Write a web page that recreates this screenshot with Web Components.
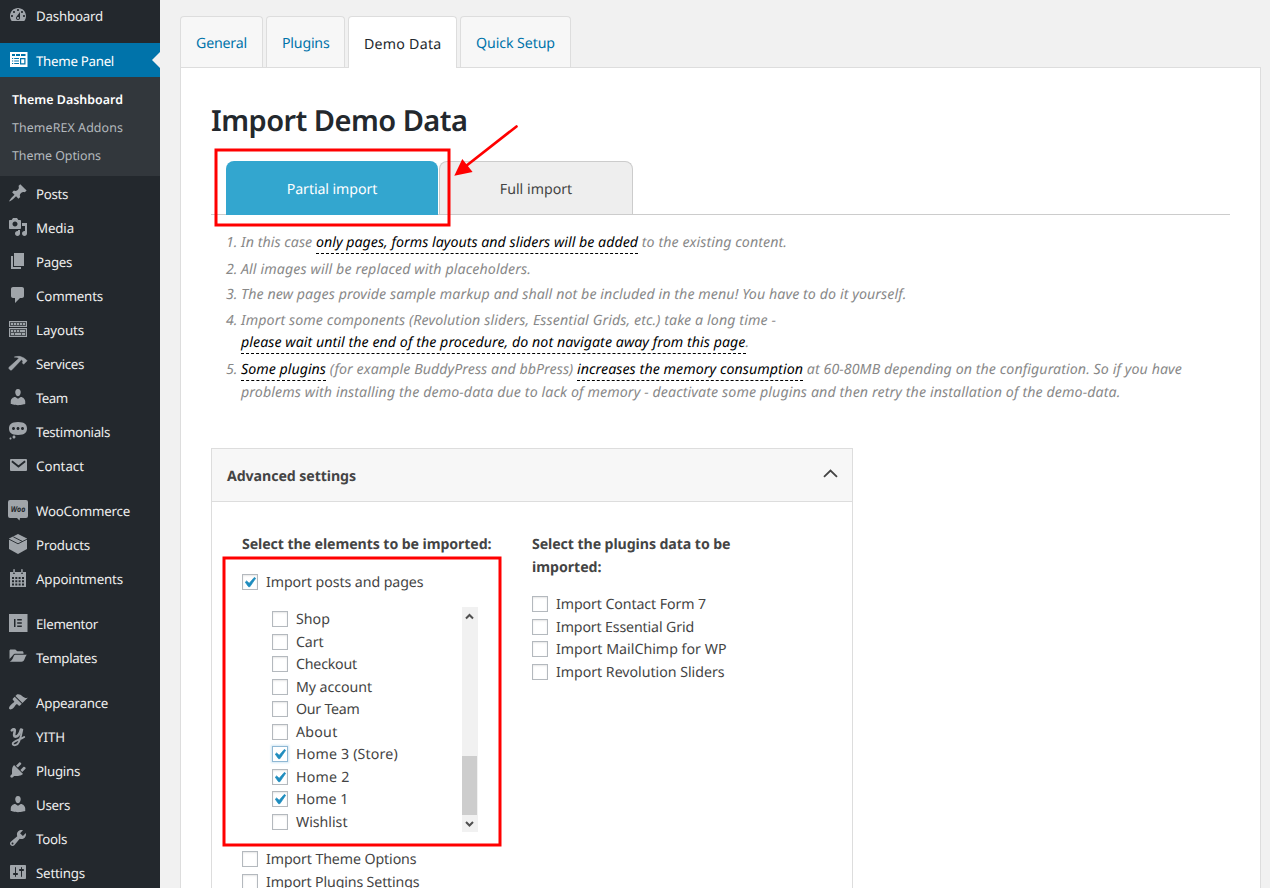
<!DOCTYPE html>
<html lang="en">
<head>
<meta charset="utf-8">
<title>Import Demo Data</title>
<style>
html,body{margin:0;height:100%;overflow:hidden;background:#f1f1f1;font-family:"Noto Sans","Open Sans",sans-serif;text-rendering:geometricPrecision}
</style>
</head>
<body>
<admin-app></admin-app>
<script>
const ICONS={
dash:'<path d="M3.76 16h12.48c1.1-1.37 1.76-3.11 1.76-5 0-4.42-3.58-8-8-8s-8 3.58-8 8c0 1.89.66 3.63 1.76 5zM10 4c.55 0 1 .45 1 1s-.45 1-1 1-1-.45-1-1 .45-1 1-1zM6 6c.55 0 1 .45 1 1s-.45 1-1 1-1-.45-1-1 .45-1 1-1zm8 0c.55 0 1 .45 1 1s-.45 1-1 1-1-.45-1-1 .45-1 1-1zm-5.37 5.55L12 7v6c0 1.1-.9 2-2 2s-2-.9-2-2c0-.57.24-1.08.63-1.45zM4 10c.55 0 1 .45 1 1s-.45 1-1 1-1-.45-1-1 .45-1 1-1zm12 0c.55 0 1 .45 1 1s-.45 1-1 1-1-.45-1-1 .45-1 1-1zm-5 3c0-.55-.45-1-1-1s-1 .45-1 1 .45 1 1 1 1-.45 1-1z"/>',
panel:'<path fill-rule="evenodd" d="M2 2h17.500v15H2zM4 4v2h3V4zM8 4v2h4V4zM13 4v2h4.500V4zM4 8v1h1.200V8zM6.200 8v1h4.800V8zM4 10.500v1h1.200v-1zM6.200 10.500v1h4.800v-1zM4 13v1h1.200v-1zM6.200 13v1h4.800v-1zM12 8v6.500h5.500V8zM13.200 9.200h3.100v4.100h-3.100z"/>',
pin:'<path d="M10.44 3.02l1.82-1.82 6.36 6.35-1.83 1.82c-1.05-.68-2.48-.57-3.41.36l-.75.75c-.92.93-1.04 2.35-.35 3.41l-1.83 1.82-2.41-2.41-2.8 2.79c-.42.42-3.38 2.71-3.8 2.29s1.86-3.39 2.28-3.81l2.79-2.79L4.1 9.36l1.83-1.82c1.05.69 2.48.57 3.4-.36l.75-.75c.93-.92 1.05-2.35.36-3.41z"/>',
media:'<path d="M13 11V4c0-.55-.45-1-1-1h-1.67L9 1H5L3.67 3H2c-.55 0-1 .45-1 1v7c0 .55.45 1 1 1h10c.55 0 1-.45 1-1zM7 4.5c1.38 0 2.5 1.12 2.5 2.5S8.38 9.5 7 9.5 4.5 8.38 4.5 7 5.62 4.5 7 4.5zM14 6h5v10.5c0 1.38-1.12 2.5-2.5 2.5S14 17.88 14 16.5s1.12-2.5 2.5-2.5c.17 0 .34.02.5.05V9h-3V6zm-4 8.05V13h2v3.5c0 1.38-1.12 2.5-2.5 2.5S7 17.88 7 16.5 8.12 14 9.5 14c.17 0 .34.02.5.05z"/>',
page:'<path d="M6 15V2h10v13H6zm-1 1h8v2H3V5h2v11z"/>',
comment:'<path d="M5 2h9c1.1 0 2 .9 2 2v7c0 1.1-.9 2-2 2h-2l-5 5v-5H5c-1.1 0-2-.9-2-2V4c0-1.1.9-2 2-2z"/>',
layouts:'<path fill-rule="evenodd" d="M1 2h18v6H1zM2 3v4h16V3zM1 9h18v9H1zM2 10v7h16v-7z"/><path d="M3 4h2v2H3zM6 4h2v2H6zM9 4h2v2H9zM12 4h2v2h-2zM15 4h2v2h-2zM3 11h2v2H3zM6 11h2v2H6zM9 11h2v2H9zM12 11h5v2h-5zM3 14h3v2H3zM7 14h6v2H7zM14 14h3v2h-3z"/><path opacity=".3" d="M2 3h16v4H2zM2 10h16v7H2z"/>',
hammer:'<path d="M17.7 6.32l1.41 1.42-3.47 3.41-1.42-1.42.84-.82c-.32-.76-.81-1.57-1.51-2.31l-4.61 4.79-5.26 5.5c-.39.39-1.02.39-1.42 0l-1.2-1.21c-.39-.39-.39-1.02 0-1.41l9.97-8.92c-1.37-.86-2.71-1.26-4.67-1.28 2.7-.82 4.95-.93 6.58-.3 1.7.66 3.32 1.2 4.76 2.55z" stroke="#a0a5aa" stroke-width=".6"/>',
user:'<path d="M10 9.25c-2.27 0-2.73-3.44-2.73-3.44C7 4.02 7.82 2 9.97 2c2.16 0 2.98 2.02 2.71 3.81 0 0-.41 3.44-2.68 3.44zm0 2.57L12.72 10c2.39 0 4.52 2.33 4.52 4.53v2.49s-3.65 1.13-7.24 1.13c-3.65 0-7.24-1.13-7.24-1.13v-2.49c0-2.25 1.94-4.48 4.47-4.48z"/>',
status:'<path d="M10 1c7 0 9 2.91 9 6.5S17 14 10 14s-9-2.91-9-6.5S3 1 10 1zM5.5 9C6.33 9 7 8.33 7 7.5S6.33 6 5.5 6 4 6.67 4 7.5 4.67 9 5.5 9zM10 9c.83 0 1.5-.67 1.5-1.5S10.83 6 10 6s-1.500.67-1.500 1.500S9.170 9 10 9zm4.500 0c.83 0 1.500-.67 1.500-1.500S15.330 6 14.500 6 13 6.670 13 7.500 13.670 9 14.500 9zM6 14.500c.83 0 1.500.67 1.500 1.500s-.67 1.500-1.500 1.500-1.500-.67-1.500-1.500.67-1.500 1.500-1.500zm-3.500 2c.55 0 1 .45 1 1s-.45 1-1 1-1-.45-1-1 .45-1 1-1z"/>',
mail:'<rect x="2" y="4" width="17" height="12" rx="1"/><path d="M3.900 6.200l6.600 5.300 6.600-5.300" fill="none" stroke="#23282d" stroke-width="1.800"/>',
woo:'<path d="M2 0h16a2 2 0 0 1 2 2v14a2 2 0 0 1-2 2h-6l-.5 2.500L9 18H2a2 2 0 0 1-2-2V2a2 2 0 0 1 2-2z"/><text x="2.800" y="11.500" font-size="8" font-weight="700" font-style="italic" textLength="14.500" lengthAdjust="spacingAndGlyphs" fill="#23282d" font-family="Open Sans">Woo</text>',
box:'<path d="M10 0l9 4.500v10.500L10 20 1 15V4.500z"/><path d="M1 5.200l9 4.600 9-4.600M5.300 2.800l9 4.600" fill="none" stroke="#23282d" stroke-width=".9"/>',
cal:'<path fill-rule="evenodd" d="M2 4h3v2h2V4h6v2h2V4h3v15H2zM4 9v2h2V9zM7.300 9v2h2V9zM10.600 9v2h2V9zM14 9v2h2V9zM4 12.200v2h2v-2zM7.300 12.200v2h2v-2zM10.600 12.200v2h2v-2zM14 12.200v2h2v-2zM4 15.400v2h2v-2zM7.300 15.400v2h2v-2zM10.600 15.400v2h2v-2zM14 15.400v2h2v-2z"/><rect x="5.300" y="1" width="1.500" height="4.500" rx=".7"/><rect x="13.200" y="1" width="1.500" height="4.500" rx=".7"/>',
elem:'<path fill-rule="evenodd" d="M1 1h18.500v18H1zM6 6v8h1.500V6zM9.200 6v1.400h4.600V6zM9.200 9.300v1.400h4.600V9.300zM9.200 12.600V14h4.600v-1.400z"/>',
folder:'<path d="M1.500 12V4c0-1 .5-1.500 1.300-1.500H7c1 0 1.500 1.700 2.500 1.700h4.500c1 0 1.500.5 1.500 1.800v.8H8c-2 0-2.500.6-3.300 1.800z"/><path d="M1.700 14.700c1.500-.5 3-2.500 3.800-5 .4-1.300 1-1.900 2.300-1.900H19c-1 .5-1.500 2-2.200 3.600-.9 2.300-1.700 3.300-3.300 3.300z"/>',
brush:'<path d="M14.480 11.060L7.410 3.990l1.500-1.500c.5-.56 2.300-.47 3.510.32 1.210.8 1.430 1.280 2.910 2.100 1.180.64 2.450 1.260 4.450.85zm-.71.71L6.700 4.700 4.930 6.470c-.39.39-.39 1.020 0 1.410l1.060 1.060c.39.39.39 1.030 0 1.420-.6.6-1.430 1.110-2.210 1.690-.35.26-.7.53-1.010.84C1.430 14.230.4 16.080 1.400 17.070c.99 1 2.840-.03 4.180-1.360.31-.31.58-.66.85-1.020.57-.78 1.080-1.610 1.690-2.210.39-.39 1.020-.39 1.410 0l1.060 1.060c.39.39 1.020.39 1.410 0z"/>',
yith:'<g fill="none" stroke="#a0a5aa" stroke-linecap="round" stroke-linejoin="round"><path d="M3.800 4.300c1.600-1.600 3.400-1.400 2.900 1-.6 3-1.200 5.300.6 5.300 2.600 0 4.800-3.800 5.700-7" stroke-width="2.600"/><path d="M14.300 3.600c-1.200 6.500-2 9-3.300 12.200-1.400 4-6.300 4.400-6.300 1.900 0-2.300 6.500-3.600 11.500-6.700" stroke-width="1.900"/></g>',
plug:'<path d="M13.110 4.360L9.870 7.600 8 5.730l3.240-3.240c.35-.34 1.050-.2 1.560.32.52.51.66 1.210.31 1.550zm-8 1.770l.91-1.120 9.010 9.010-1.190.84c-.71.71-2.630 1.160-3.820 1.160H6.140L4.900 17.260c-.59.59-1.540.59-2.120 0-.59-.58-.59-1.530 0-2.120l1.240-1.240v-3.880c0-1.130.4-3.190 1.090-3.890zm7.260 3.970l3.240-3.240c.34-.35 1.040-.21 1.550.31.52.51.66 1.210.31 1.550l-3.240 3.250z"/>',
tools:'<path d="M16.680 9.770c-1.340 1.340-3.300 1.670-4.950.99l-5.410 6.520c-.99.99-2.590.99-3.580 0s-.99-2.590 0-3.570l6.520-5.420c-.68-1.650-.35-3.610.99-4.950 1.280-1.280 3.120-1.620 4.720-1.060l-2.890 2.890 2.820 2.820 2.860-2.870c.53 1.580.18 3.390-1.080 4.650zM3.810 16.210c.4.39 1.040.39 1.430 0 .4-.4.4-1.040 0-1.430-.39-.4-1.030-.4-1.430 0-.39.39-.39 1.030 0 1.430z"/>',
sliders:'<path d="M18 16V4c0-.55-.45-1-1-1H3c-.55 0-1 .45-1 1v12c0 .55.45 1 1 1h14c.55 0 1-.45 1-1zM8 11h1c.55 0 1 .45 1 1s-.45 1-1 1H8v1.500c0 .28-.22.5-.5.5s-.5-.22-.5-.5V13H6c-.55 0-1-.45-1-1s.45-1 1-1h1V5.500c0-.28.22-.5.5-.5s.5.22.5.5V11zm5-2h-1c-.55 0-1-.45-1-1s.45-1 1-1h1V5.500c0-.28.22-.5.5-.5s.5.22.5.5V7h1c.55 0 1 .45 1 1s-.45 1-1 1h-1v5.500c0 .28-.22.5-.5.5s-.5-.22-.5-.5V9z"/>'
};
const define=(name,html,init)=>customElements.define(name,class extends HTMLElement{
  constructor(){super();this.attachShadow({mode:'open'});}
  connectedCallback(){
    if(this.ready)return;this.ready=true;
    const t=document.createElement('template');
    t.innerHTML=typeof html==='function'?html(this):html;
    this.shadowRoot.append(t.content.cloneNode(true));
    if(init)init(this);
  }
});

/* A single line of text tracked to the advance width given in "w". */
define('fit-text','<style>:host{display:inline-block;white-space:pre}</style><span><slot></slot></span>',el=>{
  const s=el.shadowRoot.querySelector('span'),n=el.textContent.length;
  el.style.letterSpacing=((el.getAttribute('w')-s.getBoundingClientRect().width)/n).toFixed(4)+'px';
  el.style.width=el.getAttribute('w')+'px';
});

define('menu-item',el=>`<style>
:host{display:flex;position:relative;height:34px;color:#eee;font-size:13.3px;line-height:34px}
:host([gap]){margin-top:11px}
:host([active]){background:#0073aa;color:#fff}
svg{width:20px;height:20px;margin:7px 8px;fill:#a0a5aa;overflow:visible;flex:none}
:host([active]) svg{fill:#fff}
fit-text{padding-top:1px}
:host([active])::after{content:"";position:absolute;right:0;top:9px;border:8px solid transparent;border-right-color:#f1f1f1;border-left:0}
</style><svg viewBox="0 0 20 20">${ICONS[el.getAttribute('icon')]}</svg><fit-text w="${el.getAttribute('w')}">${el.textContent}</fit-text>`);

define('sub-menu',`<style>
:host{display:block;box-sizing:border-box;height:99px;padding:9px 12px 0;background:#32373c;color:#b4b9be;font-size:12.4px}
div{height:28px;line-height:28px}
.on{color:#fff;font-weight:600}
</style><div class="on"><fit-text w="111">Theme Dashboard</fit-text></div><div><fit-text w="111">ThemeREX Addons</fit-text></div><div><fit-text w="89">Theme Options</fit-text></div>`);

define('side-bar',()=>{
  const rest=[['pin','Posts',32],['media','Media',38],['page','Pages',36],['comment','Comments',67],['layouts','Layouts',48],['hammer','Services',48],['user','Team',31.500],['status','Testimonials',74],['mail','Contact',48],
  ['woo','WooCommerce',94,1],['box','Products',54],['cal','Appointments',87],['elem','Elementor',62,1],['folder','Templates',61],['brush','Appearance',72,1],['yith','YITH',29],['plug','Plugins',44],['user','Users',34],['tools','Tools',31],['sliders','Settings',49]];
  return `<style>:host{display:block;width:160px;flex:none;background:#23282d;overflow:hidden}nav{margin-top:-2px}</style>
<nav><menu-item icon="dash" w="67">Dashboard</menu-item><menu-item icon="panel" w="78" gap active>Theme Panel</menu-item><sub-menu></sub-menu>${rest.map(r=>`<menu-item icon="${r[0]}" w="${r[2]}"${r[3]?' gap':''}>${r[1]}</menu-item>`).join('')}</nav>`;
});

define('panel-tabs',`<style>
:host{display:flex;gap:3px;height:51px;font-size:14.2px;color:#0073aa;line-height:53px}
div{box-sizing:border-box;height:51px;border:1px solid #ddd;border-bottom:0;border-radius:4px 4px 0 0;background:#f7f7f7;padding-left:15px}
.on{height:52px;background:#fff;color:#23282d;line-height:55px;position:relative}
</style><div style="width:83px"><fit-text w="51">General</fit-text></div><div style="width:79px"><fit-text w="47.500">Plugins</fit-text></div><div class="on" style="width:109px"><fit-text w="77.500">Demo Data</fit-text></div><div style="width:111px"><fit-text w="79">Quick Setup</fit-text></div>`);

define('import-modes',`<style>
:host{display:flex;gap:1px;box-sizing:border-box;height:54px;padding-left:15px;border-bottom:1px solid #ccc;font-size:14.2px;line-height:57px}
div{box-sizing:border-box;height:54px;border-radius:8px 8px 0 0;text-align:center}
.on{width:212px;background:#33a6cf;color:#fff}
.off{width:194px;height:53px;background:#eee;border:1px solid #ccc;border-bottom:0;color:#444;line-height:55px}
</style><div class="on"><fit-text w="90.500">Partial import</fit-text></div><div class="off"><fit-text w="72.500">Full import</fit-text></div>`);

define('import-notes',`<style>
:host{display:block;padding:16px 0 0 15px;font-size:14.2px;font-style:italic;line-height:24px;color:#888}
div{display:flex;height:22px;white-space:pre;padding-left:15px}
.n{padding-left:0}
.n::before{content:attr(data-n);width:15px}
.s{margin-top:3px}.m{margin-top:4px}.l{margin-top:5px}
.u{color:#000;height:22px;border-bottom:1px dashed #000}
</style>
<div class="n" data-n="1."><fit-text w="75">In this case </fit-text><fit-text class="u" w="322">only pages, forms layouts and sliders will be added</fit-text><fit-text w="149"> to the existing content.</fit-text></div>
<div class="n l" data-n="2."><fit-text w="290">All images will be replaced with placeholders.</fit-text></div>
<div class="n s" data-n="3."><fit-text w="665.500">The new pages provide sample markup and shall not be included in the menu! You have to do it yourself.</fit-text></div>
<div class="n m" data-n="4."><fit-text w="535">Import some components (Revolution sliders, Essential Grids, etc.) take a long time -</fit-text></div>
<div><fit-text class="u" w="504.500">please wait until the end of the procedure, do not navigate away from this page</fit-text><fit-text w="3">.</fit-text></div>
<div class="n l" data-n="5."><fit-text class="u" w="85">Some plugins</fit-text><fit-text w="251"> (for example BuddyPress and bbPress) </fit-text><fit-text class="u" w="226">increases the memory consumption</fit-text><fit-text w="379"> at 60-80MB depending on the configuration. So if you have</fit-text></div>
<div style="margin-top:1px"><fit-text w="879.500">problems with installing the demo-data due to lack of memory - deactivate some plugins and then retry the installation of the demo-data.</fit-text></div>`);

define('check-row',el=>`<style>
:host{display:flex;height:22.5px;font-size:14.2px;line-height:18px;color:#444;gap:8px}
i{box-sizing:border-box;width:16px;height:16px;border:1px solid #b4b9be;background:#fff;box-shadow:inset 0 1px 2px rgba(0,0,0,.1);flex:none}
:host([focused]) i{border-color:#8fb8d4;box-shadow:0 0 2px 1px #d3e8f5}
svg{display:block;width:14px;height:14px;overflow:visible}
</style><i>${el.hasAttribute('checked')?'<svg viewBox="0 0 14 14"><path transform="translate(-3.500 -2.500)" fill="#1e8cbe" stroke="#1e8cbe" stroke-width=".7" d="M14.830 4.890l1.340.94-5.810 8.380H9.020L5.780 9.670l1.340-1.250 2.570 2.400z"/></svg>':''}</i><fit-text w="${el.getAttribute('w')}">${el.textContent}</fit-text>`);

define('page-list',`<style>
:host{display:flex;height:225px;width:206px;margin:10.500px 0 0 30px;justify-content:space-between}
.rows{padding-top:4px;height:221px;overflow:visible}
.bar{width:16px;background:#f1f1f1;display:flex;flex-direction:column}
.thumb{width:15px;height:59px;background:#cdcdcd}
.up{height:149px}.dn{height:17px}
svg{display:block;width:16px;height:17px}
path{fill:none;stroke:#505050;stroke-width:2}
</style><div class="rows">
<check-row w="34">Shop</check-row><check-row w="27.500">Cart</check-row><check-row w="61">Checkout</check-row><check-row w="76">My account</check-row><check-row w="63.500">Our Team</check-row><check-row w="41.500">About</check-row><check-row checked focused w="102">Home 3 (Store)</check-row><check-row checked w="53.500">Home 2</check-row><check-row checked w="52.500">Home 1</check-row><check-row w="51.500">Wishlist</check-row></div>
<div class="bar"><div class="up"><svg><path d="M4 11.500l3.500-3.500 3.500 3.500"/></svg></div><div class="thumb"></div><div class="dn"><svg><path d="M4 7l3.500 3.500L11 7"/></svg></div></div>`);

define('advanced-settings',`<style>
:host{display:block;box-sizing:border-box;width:642px;height:520px;margin-top:45px;border:1px solid #ddd;color:#444;font-size:14.2px}
header{display:flex;justify-content:space-between;box-sizing:border-box;height:53px;padding:0 14px 0 15px;border-bottom:1px solid #ddd;background:#f7f7f7;font-weight:700;line-height:56px}
header svg{width:15px;height:9px;margin-top:20px}
main{display:grid;grid-template-columns:290px 1fr;padding:32px 30px}
h4{margin:0;font-size:14.2px;font-weight:700;line-height:22.500px}
.after{margin-top:19px}
</style><header><fit-text w="129">Advanced settings</fit-text><svg viewBox="0 0 15 9"><path d="M1 7.800l6.500-6.300L14 7.800" fill="none" stroke="#444" stroke-width="1.800"/></svg></header>
<main><section><h4><fit-text w="249.500">Select the elements to be imported:</fit-text></h4>
<check-row style="margin-top:17.500px" checked w="157.500">Import posts and pages</check-row>
<page-list></page-list>
<div class="after"><check-row w="150.500">Import Theme Options</check-row><check-row w="153.500">Import Plugins Settings</check-row></div></section>
<section><h4><fit-text w="198.500">Select the plugins data to be</fit-text><br><fit-text w="69.500">imported:</fit-text></h4>
<div style="margin-top:17px"><check-row w="150">Import Contact Form 7</check-row><check-row w="138">Import Essential Grid</check-row><check-row w="170.500">Import MailChimp for WP</check-row><check-row w="168.500">Import Revolution Sliders</check-row></div></section></main>`);

/* Red call-outs that lie over the page. */
define('mark-up',`<style>:host{position:absolute;inset:0;pointer-events:none}svg{display:block}</style>
<svg width="1270" height="888" fill="none" stroke="#f00" stroke-width="3"><rect x="216" y="150" width="233" height="75"/><rect x="224" y="558" width="276" height="287"/><path d="M516.500 126.500L466 166" stroke-width="2.700" stroke-linecap="round"/><path d="M454.300 175.800l8-16.800 10.300 13z" fill="#f00" stroke="none"/></svg>`);

define('admin-app',`<style>
:host{display:flex;position:relative;width:1270px;height:888px;overflow:hidden}
.content{flex:1;padding:16px 9px 0 20px;min-width:0}
.panel{box-sizing:border-box;height:900px;border:1px solid #ddd;background:#fff;padding:33px 30px 0}
h1{margin:0;height:60px;font-size:29px;font-weight:600;line-height:40px;color:#23282d}
</style><side-bar></side-bar><div class="content"><panel-tabs></panel-tabs><div class="panel"><h1><fit-text w="256.500">Import Demo Data</fit-text></h1><import-modes></import-modes><import-notes></import-notes><advanced-settings></advanced-settings></div></div><mark-up></mark-up>`);
</script>
</body>
</html>
